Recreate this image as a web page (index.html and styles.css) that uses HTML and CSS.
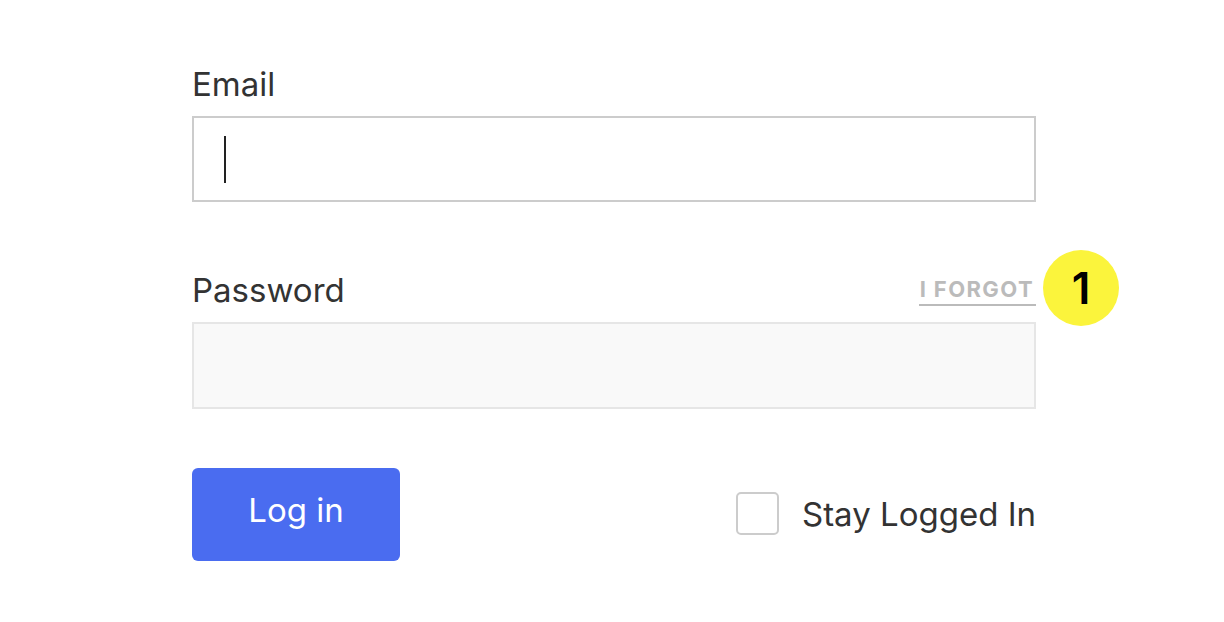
FILE: index.html
```html
<!DOCTYPE html>
<html>
<head>
<meta charset="utf-8">
<link rel="stylesheet" href="styles.css">
</head>
<body>
<form class="login">
  <div class="field">
    <div class="label-row"><label class="label">Email</label></div>
    <div class="input input-email"><span class="caret"></span></div>
  </div>
  <div class="field field-pass">
    <div class="label-row">
      <label class="label">Password</label>
      <a class="forgot">I FORGOT<span class="badge">1</span></a>
    </div>
    <div class="input input-pass"></div>
  </div>
  <div class="actions">
    <button class="btn" type="button">Log in</button>
    <label class="stay"><span class="check"></span><span class="stay-text">Stay Logged In</span></label>
  </div>
</form>
</body>
</html>
```
FILE: styles.css
```css
html, body {
  margin: 0;
  padding: 0;
  background: #ffffff;
}
body {
  font-family: Inter, "Noto Sans", "Liberation Sans", sans-serif;
  color: #333333;
}
.login {
  width: 844px;
  margin-left: 192px;
  padding-top: 62px;
}
.field {
  display: flex;
  flex-direction: column;
}
.label-row {
  display: flex;
  justify-content: space-between;
  align-items: flex-end;
  height: 44px;
  margin-bottom: 10px;
}
.label {
  font-size: 33px;
  line-height: 44px;
  color: #333333;
}
.input {
  height: 82px;
  border: 2px solid #cccccc;
  box-sizing: content-box;
  display: flex;
  align-items: center;
  padding-left: 30px;
}
.input-email {
  background: #ffffff;
}
.caret {
  width: 2px;
  height: 47px;
  background: #222222;
}
.field-pass {
  margin-top: 66px;
}
.input-pass {
  height: 83px;
  background: #f9f9f9;
  border-color: #e6e6e6;
}
.forgot {
  position: relative;
  font-size: 22px;
  font-weight: 700;
  letter-spacing: 1.4px;
  color: #bbbbbb;
  line-height: 22px;
  padding: 0 2px 4px 1px;
  border-bottom: 2px solid #bbbbbb;
  margin-bottom: 6px;
}
.badge {
  position: absolute;
  left: calc(100% + 7px);
  top: -28px;
  width: 76px;
  height: 76px;
  border-radius: 50%;
  background: #fbf43c;
  color: #000000;
  font-size: 44px;
  font-weight: 600;
  letter-spacing: 0;
  display: flex;
  align-items: center;
  justify-content: center;
}
.actions {
  display: flex;
  justify-content: space-between;
  align-items: center;
  margin-top: 59px;
}
.btn {
  width: 208px;
  height: 93px;
  border: none;
  border-radius: 6px;
  background: #4a6cf0;
  color: #ffffff;
  font-family: Inter, "Noto Sans", "Liberation Sans", sans-serif;
  font-size: 33px;
  padding: 0 0 10px 0;
}
.stay {
  display: flex;
  align-items: center;
  gap: 23px;
  margin-top: -2px;
}
.check {
  width: 39px;
  height: 39px;
  border: 2px solid #cccccc;
  border-radius: 5px;
  background: #ffffff;
}
.stay-text {
  font-size: 33px;
  color: #333333;
}
```
